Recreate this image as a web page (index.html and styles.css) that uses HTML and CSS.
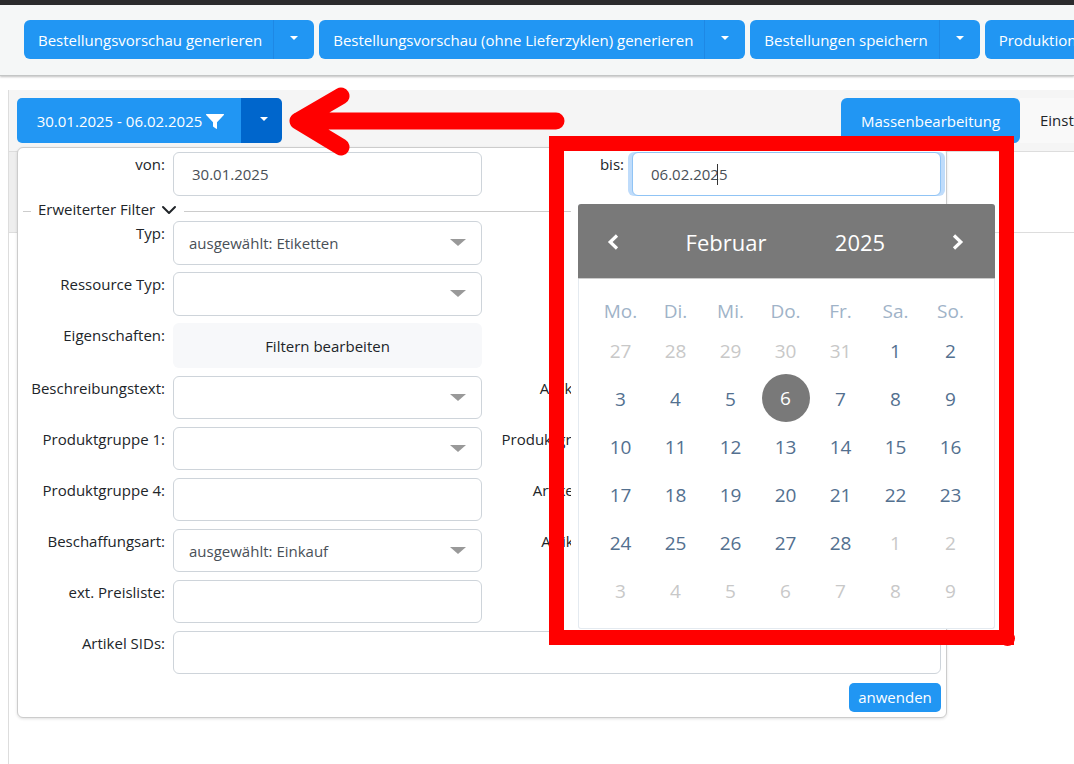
FILE: index.html
```html
<!DOCTYPE html>
<html lang="de">
<head>
<meta charset="utf-8">
<title>Bestellungen</title>
<link rel="stylesheet" href="styles.css">
</head>
<body>
<div class="darkbar"></div>
<header class="toolbar">
  <div class="split"><button class="split-main">Bestellungsvorschau generieren</button><button class="split-caret"><span class="caret"></span></button></div>
  <div class="split"><button class="split-main">Bestellungsvorschau (ohne Lieferzyklen) generieren</button><button class="split-caret"><span class="caret"></span></button></div>
  <div class="split"><button class="split-main">Bestellungen speichern</button><button class="split-caret"><span class="caret"></span></button></div>
  <div class="split"><button class="split-main">Produktionsaufträge speichern</button><button class="split-caret"><span class="caret"></span></button></div>
</header>
<main class="panel">
  <div class="tabs">
    <div class="range">
      <button class="range-main">30.01.2025 - 06.02.2025
        <svg class="funnel" viewBox="0 0 18 15" width="18" height="15"><path d="M0.6 0H17.4a.6.6 0 0 1 .45 1L11 8.2V14.4a.5.5 0 0 1-.8.4L7.3 12.7a.6.6 0 0 1-.3-.5V8.2L.15 1A.6.6 0 0 1 .6 0Z" fill="#fff"/></svg>
      </button>
      <button class="range-caret"><span class="caret"></span></button>
    </div>
    <div class="tab-actions">
      <button class="mass">Massenbearbeitung</button>
      <div class="settings">Einstellungen</div>
    </div>
  </div>
  <div class="subbar"></div>

  <section class="popup">
    <div class="row row-date">
      <div class="pair"><label class="lbl">von:</label><div class="input">30.01.2025</div></div>
      <div class="pair pair-r"><label class="lbl">bis:</label><div class="input input-focus">06.02.2025<span class="cursor"></span></div></div>
    </div>
    <div class="legend"><span class="legend-stub"></span><span class="legend-text">Erweiterter Filter</span>
      <svg class="chevron" viewBox="0 0 16 10" width="16" height="10"><path d="M2 2l6 6 6-6" fill="none" stroke="#212529" stroke-width="2" stroke-linecap="round" stroke-linejoin="round"/></svg>
      <span class="legend-line"></span></div>
    <div class="rows">
      <div class="row row-tall">
        <div class="pair"><label class="lbl">Typ:</label><div class="input select">ausgewählt: Etiketten<span class="tri"></span></div></div>
      </div>
      <div class="row row-tall">
        <div class="pair"><label class="lbl">Ressource Typ:</label><div class="input select"><span class="tri"></span></div></div>
      </div>
      <div class="row row-props">
        <div class="pair"><label class="lbl">Eigenschaften:</label><button class="props">Filtern bearbeiten</button></div>
      </div>
      <div class="row">
        <div class="pair"><label class="lbl">Beschreibungstext:</label><div class="input select"><span class="tri"></span></div></div>
        <div class="pair pair-r"><label class="lbl">Artikeltexte:</label><div class="input"></div></div>
      </div>
      <div class="row">
        <div class="pair"><label class="lbl">Produktgruppe 1:</label><div class="input select"><span class="tri"></span></div></div>
        <div class="pair pair-r"><label class="lbl">Produktgruppe 2:</label><div class="input"></div></div>
      </div>
      <div class="row">
        <div class="pair"><label class="lbl">Produktgruppe 4:</label><div class="input"></div></div>
        <div class="pair pair-r"><label class="lbl">Artikelstatus:</label><div class="input"></div></div>
      </div>
      <div class="row">
        <div class="pair"><label class="lbl">Beschaffungsart:</label><div class="input select">ausgewählt: Einkauf<span class="tri"></span></div></div>
        <div class="pair pair-r"><label class="lbl">Artikelform:</label><div class="input"></div></div>
      </div>
      <div class="row">
        <div class="pair"><label class="lbl">ext. Preisliste:</label><div class="input"></div></div>
      </div>
      <div class="row">
        <div class="pair pair-full"><label class="lbl">Artikel SIDs:</label><div class="input"></div></div>
      </div>
    </div>
    <div class="apply-row"><button class="apply">anwenden</button></div>

    <div class="calendar">
      <div class="cal-head">
        <svg class="cal-arrow cal-prev" viewBox="0 0 12 18" width="12" height="18"><path d="M10 2.500L3.200 9l6.800 6.500" fill="none" stroke="#fff" stroke-width="3.200"/></svg>
        <span class="cal-month">Februar</span>
        <span class="cal-year">2025</span>
        <svg class="cal-arrow cal-next" viewBox="0 0 12 18" width="12" height="18"><path d="M2 2.500L8.800 9l-6.800 6.500" fill="none" stroke="#fff" stroke-width="3.200"/></svg>
      </div>
      <div class="cal-body">
        <div class="cal-grid cal-week"><span>Mo.</span><span>Di.</span><span>Mi.</span><span>Do.</span><span>Fr.</span><span>Sa.</span><span>So.</span></div>
        <div class="cal-grid cal-days">
          <span class="off">27</span><span class="off">28</span><span class="off">29</span><span class="off">30</span><span class="off">31</span><span>1</span><span>2</span>
          <span>3</span><span>4</span><span>5</span><span class="sel">6</span><span>7</span><span>8</span><span>9</span>
          <span>10</span><span>11</span><span>12</span><span>13</span><span>14</span><span>15</span><span>16</span>
          <span>17</span><span>18</span><span>19</span><span>20</span><span>21</span><span>22</span><span>23</span>
          <span>24</span><span>25</span><span>26</span><span>27</span><span>28</span><span class="off">1</span><span class="off">2</span>
          <span class="off">3</span><span class="off">4</span><span class="off">5</span><span class="off">6</span><span class="off">7</span><span class="off">8</span><span class="off">9</span>
        </div>
      </div>
    </div>
  </section>
</main>
<svg class="annotation" viewBox="0 0 1074 764" width="1074" height="764">
  <path d="M556 121H298M341 96L298 121L341 147" fill="none" stroke="#f00" stroke-width="17" stroke-linecap="round" stroke-linejoin="round"/>
  <rect x="556.500" y="143.500" width="450" height="494" fill="none" stroke="#f00" stroke-width="15"/>
  <circle cx="1007.500" cy="638.500" r="7.500" fill="#f00"/>
</svg>
</body>
</html>
```
FILE: styles.css
```css
* { box-sizing: border-box; }
html, body { margin: 0; padding: 0; }
body {
  width: 1074px;
  height: 764px;
  overflow: hidden;
  position: relative;
  background: #fff;
  font-family: "Open Sans", "Liberation Sans", sans-serif;
  font-size: 15px;
  color: #212529;
}
button { font: inherit; border: 0; cursor: pointer; }

.darkbar { height: 5px; background: #2b2b2d; }
.toolbar {
  height: 71px;
  background: #f5f7f7;
  border-bottom: 1px solid #c4c6c6;
  box-shadow: 0 1px 2px rgba(0,0,0,.25);
  padding: 15px 0 0 24px;
  display: flex;
  gap: 5px;
  overflow: hidden;
}
.split { display: flex; height: 39px; flex: none; }
.split-main {
  background: #2196f3; color: #fff;
  padding: 0 11px 0 14px;
  border-radius: 6px 0 0 6px;
  white-space: nowrap;
  border-right: 1px solid #1e88e5;
}
.split-caret {
  background: #2196f3; width: 40px;
  border-radius: 0 6px 6px 0;
  display: flex; align-items: center; justify-content: center;
  padding: 0 0 3px;
}
.caret {
  width: 0; height: 0;
  border-left: 4.500px solid transparent;
  border-right: 4.500px solid transparent;
  border-top: 4.500px solid #fff;
}

.panel {
  position: relative;
  margin: 14px 0 0 8px;
  height: 674px;
  border-left: 1px solid #ddd;
}
.tabs {
  height: 62px;
  background: #f5f5f5;
  border-bottom: 1px solid #ddd;
  padding: 8px 0 0 8px;
  display: flex;
  justify-content: space-between;
  align-items: flex-start;
}
.range { display: flex; height: 45px; }
.range-main {
  width: 224px; background: #2196f3; color: #fff;
  border-radius: 5px 0 0 5px;
  display: flex; align-items: center; justify-content: center; gap: 4px;
  padding: 1px 0 0 3px;
  white-space: nowrap;
}
.range-caret {
  width: 41px; background: #0066cc;
  border-radius: 0 5px 5px 0;
  display: flex; align-items: center; justify-content: center;
  padding: 0 0 3px 4px;
}
.funnel { flex: none; }
.tab-actions { display: flex; height: 45px; width: 233px; overflow: hidden; flex: none; }
.mass {
  width: 179px; flex: none;
  background: #2196f3; color: #fff;
  border-radius: 6px;
  white-space: nowrap;
  padding: 1px 0 0;
}
.settings {
  flex: none;
  background: #f9f9f9;
  padding: 12px 20px;
  white-space: nowrap;
}
.subbar { height: 81px; border-bottom: 1px solid #ddd; background: linear-gradient(#eee, #eee) left / 8px 100% no-repeat, #fff; }

.popup {
  position: absolute;
  left: 8px; top: 57px;
  width: 930px; height: 571px;
  background: #fff;
  border: 1px solid #ccc;
  border-radius: 6px;
  box-shadow: 0 1px 3px rgba(0,0,0,.12);
  padding: 4px 0 0;
}
.row { display: flex; height: 43px; }
.rows { display: flex; flex-direction: column; gap: 8px; }
.row-date { height: 44px; }
.row-tall { height: 44px; margin-bottom: -1px; }
.row-props { height: 45px; }
.pair { display: flex; width: 464px; flex: none; }
.pair-r { width: 459px; }
.pair-full { width: 923px; }
.lbl { flex: 1; text-align: right; padding: 3px 8px 0 0; line-height: 19px; white-space: nowrap; }
.pair .input, .pair .props { width: 309px; flex: none; }
.pair-full .input { width: 768px; }
.input {
  height: 100%;
  border: 1px solid #ced4da;
  border-radius: 6px;
  background: #fff;
  color: #495057;
  padding: 0 18px;
  display: flex; align-items: center;
  position: relative;
}
.select { padding: 0 15px; }
.tri {
  position: absolute; right: 15px; top: 17px;
  width: 0; height: 0;
  border-left: 8px solid transparent;
  border-right: 8px solid transparent;
  border-top: 7px solid #999;
}
.input-focus { border-color: #90c4f5; box-shadow: -4px 0 0 #bfdcfb, 4px 0 0 #bfdcfb; }
.cursor { position: absolute; left: 84px; top: 11px; width: 1px; height: 21px; background: #333; }
.props { background: #f7f8fa; border-radius: 6px; color: #212529; height: 100%; padding: 0; }
.legend { display: flex; align-items: center; height: 25px; padding: 5px 0 0 5px; }
.legend-stub { width: 8px; height: 1px; background: #ccc; }
.legend-text { margin: -4px 6px 0 7px; line-height: 19px; }
.chevron { flex: none; margin-top: -3px; }
.legend-line { flex: 1; height: 1px; background: #ccc; margin: 0 5px 0 7px; }
.apply-row { display: flex; justify-content: flex-end; padding: 9px 5px 0 0; }
.apply {
  width: 92px; height: 29px;
  background: #2196f3; color: #fff;
  border-radius: 5px; padding: 0 0 1px;
}

.calendar {
  position: absolute;
  left: 560px; top: 56px;
  width: 417px; height: 425px;
  background: #fff;
  border-radius: 3px;
  border: 1px solid #e4eaf0;
  border-top: 0;
  box-shadow: -7px 0 0 #fff;
}
.cal-head {
  height: 75px; margin: 0 -1px;
  background: #797979;
  border-radius: 3px 3px 0 0;
  border-bottom: 1px solid #ccc;
  color: #fff;
  font-size: 22px;
  padding-top: 2px;
  display: grid;
  grid-template-columns: 70px 156px 112px 1fr;
  align-items: center;
  justify-items: center;
}
.cal-next { justify-self: start; margin-left: 36px; }
.cal-body { padding: 16px 0 0 14px; }
.cal-grid { display: grid; grid-template-columns: repeat(7, 55px); text-align: center; }
.cal-week { height: 32px; align-items: center; color: #9fb3c8; font-size: 19px; }
.cal-days { grid-auto-rows: 48px; color: #53708f; font-size: 19px; align-items: center; justify-items: center; }
.cal-days .off { color: #c8c8c8; }
.cal-days .sel {
  width: 48px; height: 48px; line-height: 48px;
  margin-top: -2px;
  border-radius: 50%;
  background: #797979; color: #fff;
}

.annotation { position: absolute; left: 0; top: 0; pointer-events: none; }
```
